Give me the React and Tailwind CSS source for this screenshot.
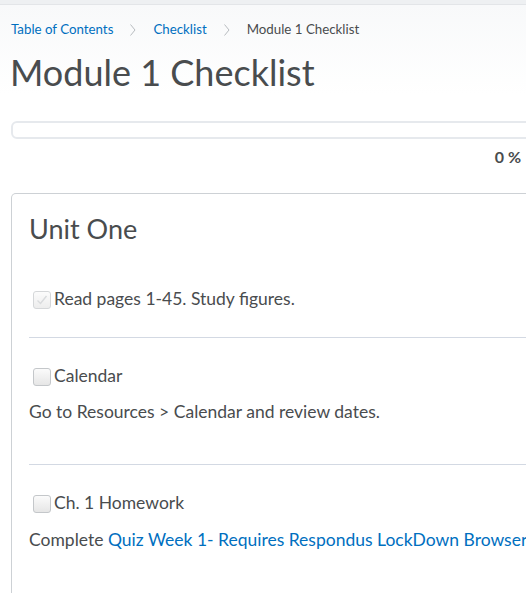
import React from 'react'

function Check({ checked, disabled }) {
  return (
    <span className={`inline-flex items-center justify-center w-[18px] h-[18px] mt-[4px] shrink-0 rounded-[3px] border border-[#c4c7ca] bg-gradient-to-b from-[#fbfbfb] to-[#e6e6e6] ${disabled ? 'opacity-70' : ''}`}>
      {checked && (
        <svg width="14" height="14" viewBox="0 0 14 14" fill="none">
          <path d="M2.5 7.5 L5.5 10.5 L11.5 3" stroke="#c9cccf" strokeWidth="1.4" />
        </svg>
      )}
    </span>
  )
}

function Chevron() {
  return (
    <svg width="8" height="14" viewBox="0 0 8 14" className="mx-[16px]" fill="none">
      <path d="M1.5 1.5 L6 7 L1.5 12.5" stroke="#b8bcc0" strokeWidth="1" />
    </svg>
  )
}

export default function App() {
  const font = { fontFamily: 'Lato, "Open Sans", sans-serif' }
  return (
    <div className="w-[526px] h-[593px] overflow-hidden bg-white text-[#494c4e]" style={font}>
      <div className="h-[5px] bg-[#eef0f2] border-b border-[#e3e5e8]" />
      <div className="bg-gradient-to-b from-[#f8f9fa] to-white pt-[15px]">
        <nav className="flex items-center h-[20px] pl-[11px] text-[13.3px]">
          <a className="text-[#006fbf]">Table of Contents</a>
          <Chevron />
          <a className="text-[#006fbf]">Checklist</a>
          <Chevron />
          <span>Module 1 Checklist</span>
        </nav>
        <h1 className="pl-[10px] mt-[9px] text-[36px] leading-[46px] font-normal">Module 1 Checklist</h1>
      </div>
      <div className="w-[560px] pl-[11px] mt-[26px]">
        <div className="h-[18px] rounded-[6px] border-2 border-[#e6e9ed] bg-white" />
      </div>
      <div className="w-[526px] pr-[5px] text-right font-bold text-[16px] leading-[20px] mt-[8px]">0 %</div>
      <div className="ml-[11px] w-[560px] mt-[26px] rounded-t-[5px] border border-[#cdd1d5] border-b-0 h-[500px] pl-[17px]">
        <h2 className="text-[27px] leading-[32px] mt-[19px]">Unit One</h2>
        <div className="mt-[42px] pb-[26px] border-b border-[#d3d9e3]">
          <label className="flex items-start gap-[3px] text-[17.5px] leading-[24px] pl-[4px]">
            <Check checked disabled />
            <span>Read pages 1-45. Study figures.</span>
          </label>
        </div>
        <div className="pt-[26px] pb-[40px] border-b border-[#d3d9e3]">
          <label className="flex items-start gap-[3px] text-[17.5px] leading-[24px] pl-[4px]">
            <Check />
            <span>Calendar</span>
          </label>
          <p className="text-[17.5px] leading-[24px] mt-[12px]">Go to Resources &gt; Calendar and review dates.</p>
        </div>
        <div className="pt-[26px]">
          <label className="flex items-start gap-[3px] text-[17.5px] leading-[24px] pl-[4px]">
            <Check />
            <span>Ch. 1 Homework</span>
          </label>
          <p className="text-[17.5px] leading-[24px] mt-[13px] whitespace-nowrap">
            Complete <a className="text-[#006fbf]">Quiz Week 1- Requires Respondus LockDown Browser</a>
          </p>
        </div>
      </div>
    </div>
  )
}
